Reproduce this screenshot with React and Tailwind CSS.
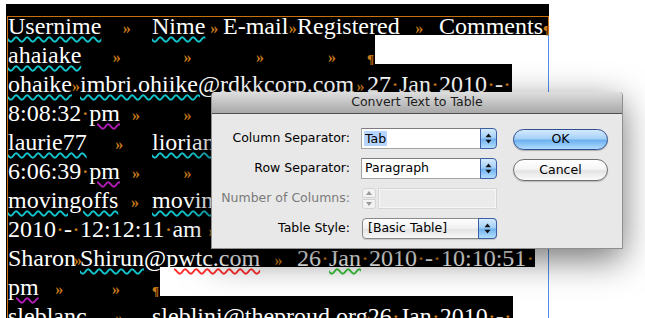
import React from 'react';

const STOPS = [80, 152, 223, 297, 367, 439, 511];

let _ctx = null;
function textWidth(s) {
  if (!_ctx) _ctx = document.createElement('canvas').getContext('2d');
  _ctx.font = '24px "Liberation Serif"';
  return _ctx.measureText(s).width;
}

const UL = {
  c: 'underline decoration-wavy decoration-[1.5px] underline-offset-[2px] decoration-[#12c4cc]',
  m: 'underline decoration-wavy decoration-[1.5px] underline-offset-[2px] decoration-[#b11cb8]',
  r: 'underline decoration-wavy decoration-[1.5px] underline-offset-[2px] decoration-[#ff2d2d]',
  g: 'underline decoration-wavy decoration-[1.5px] underline-offset-[2px] decoration-[#39c239]',
};

const LINES = [
  [{ u: 'c', t: 'Usernime' }, 'T', { u: 'c', t: 'Nime' }, 'T', 'E-mail', 'T', 'Registered', 'T', 'Comments', 'P'],
  [{ u: 'c', t: 'ahaiake' }, 'T', 'T', 'T', 'T', 'P'],
  [{ u: 'c', t: 'ohaike' }, 'T', { u: 'c', t: 'imbri.ohiike@rdkkcorp.com' }, 'T', '27 Jan 2010 - '],
  ['8:08:32 ', { u: 'm', t: 'pm' }, 'T', 'T', 'T', 'T', 'P'],
  [{ u: 'c', t: 'laurie77' }, 'T', { u: 'c', t: 'liorian@aol.com' }, 'T', '27 Jan 2010 - '],
  ['6:06:39 ', { u: 'm', t: 'pm' }, 'T', 'T', 'T', 'T', 'P'],
  [{ u: 'c', t: 'movingoffs' }, 'T', { u: 'c', t: 'movingoffs@aol.com' }, 'T', '27 Jan '],
  ['2010 - 12:12:11 am', 'T', 'T', 'T', 'P'],
  ['Sharon', 'T', { u: 'c', t: 'Shirun' }, '@', { u: 'r', t: 'pwtc.com' }, 'T', '26 ', { u: 'g', t: 'Jan' }, ' 2010 - 10:10:51 '],
  [{ u: 'm', t: 'pm' }, 'T', 'T', 'P'],
  [{ u: 'c', t: 'sleblanc' }, 'T', { u: 'c', t: 'sleblini' }, '@theproud.org', 'T0', '26 Jan 2010 - '],
];

function Txt({ s }) {
  const parts = s.split(' ');
  return parts.map((p, i) => (
    <React.Fragment key={i}>
      {i > 0 && <span className="text-[#c8791a]">·</span>}
      {p}
    </React.Fragment>
  ));
}

function DocLine({ items, first }) {
  let x = 8;
  const out = [];
  items.forEach((it, i) => {
    if (it === 'T' || it === 'T0') {
      let w = 0;
      if (it === 'T') {
        const stop = STOPS.find((s) => s > x + 0.5) ?? x + 40;
        w = Math.max(0, stop - x);
      }
      out.push(
        <span
          key={i}
          className="inline-flex justify-center leading-none text-[16px] font-bold text-[#c8791a]"
          style={{ width: w }}
        >
          »
        </span>
      );
      x += w;
    } else if (it === 'P') {
      out.push(
        <span key={i} className="leading-none text-[13px] font-bold text-[#c8791a]">
          ¶
        </span>
      );
      x += 7;
    } else if (typeof it === 'string') {
      out.push(<Txt key={i} s={it} />);
      x += textWidth(it.replace(/ /g, '·'));
    } else {
      out.push(
        <span key={i} className={UL[it.u]}>
          <Txt s={it.t} />
        </span>
      );
      x += textWidth(it.t);
    }
  });
  return (
    <div
      className={
        first
          ? 'h-[31px] pt-[8px] w-[543px] leading-[29px] bg-black text-white pl-[2px] whitespace-nowrap'
          : 'h-[29px] pt-[6px] w-fit leading-[29px] bg-black text-white pl-[2px] pr-[1px] whitespace-nowrap'
      }
    >
      {out}
    </div>
  );
}

function Arrows({ color = '#111' }) {
  return (
    <svg width="7" height="11" viewBox="0 0 7 11">
      <path d="M3.5 0.5 L6.5 4.2 L0.5 4.2Z" fill={color} />
      <path d="M0.5 6.8 L6.5 6.8 L3.5 10.5Z" fill={color} />
    </svg>
  );
}

function BlueStep() {
  return (
    <div className="w-[17px] h-[21px] shrink-0 rounded-r-[4px] border border-[#3b5fa6] bg-[linear-gradient(to_bottom,#d6ebfd_0%,#a3d0f8_45%,#73b4ef_55%,#b4defe_100%)] flex items-center justify-center">
      <Arrows />
    </div>
  );
}

function Combo({ children }) {
  return (
    <div className="flex h-[21px]">
      <div className="flex-1 bg-white border border-[#a4a4a4] border-t-[#7d7d7d] flex items-center pl-[2px] -mr-px">
        {children}
      </div>
      <BlueStep />
    </div>
  );
}

function Label({ children, dim }) {
  return (
    <div className={`flex items-center justify-end h-[21px] ${dim ? 'text-[#7a7a7a]' : 'text-black'}`}>
      {children}
    </div>
  );
}

export default function App() {
  return (
    <div className="relative w-[645px] h-[318px] overflow-hidden bg-white font-['Liberation_Serif',serif] text-[24px]">
      <div className="pt-[4px] pl-[6px]">
        {LINES.map((l, i) => (
          <DocLine key={i} items={l} first={i === 0} />
        ))}
      </div>

      {/* frame edges */}
      <div className="absolute left-[7px] top-[16px] w-[542px] h-px bg-[#c8700a]" />
      <div className="absolute left-[7px] top-[16px] w-px h-[302px] bg-[#c8700a]" />
      <div className="absolute left-[548px] top-[16px] w-px h-[19px] bg-[#c8700a]" />
      <div className="absolute left-[548px] top-[35px] w-px h-[283px] bg-[#4d8ff0]" />

      {/* dialog */}
      <div className="absolute left-[211px] top-[92px] w-[412px] h-[157px] bg-[#e8e8e8] border border-t-0 border-[#8f8f8f] rounded-t-[4px] shadow-[0_10px_35px_rgba(0,0,0,0.55)] font-['DejaVu_Sans',sans-serif] text-[12.5px] leading-none text-black">
        <div className="h-[22px] rounded-t-[4px] border-b border-[#4f4f4f] bg-[linear-gradient(to_bottom,#dedede,#a8a8a8)] flex items-center justify-center text-[#1c1c1c]">
          Convert Text to Table
        </div>
        <div className="flex pt-[14px]">
          <div className="grid grid-cols-[138px_136px] gap-x-[11px] gap-y-[9px] auto-rows-[21px]">
            <Label>Column Separator:</Label>
            <Combo>
              <span className="bg-[#b5d5ff] px-[1px] leading-[15px]">Tab</span>
            </Combo>

            <Label>Row Separator:</Label>
            <Combo>
              <span className="px-[1px]">Paragraph</span>
            </Combo>

            <Label dim>Number of Columns:</Label>
            <div className="flex h-[21px] gap-[2px] pl-px">
              <div className="w-[14px] h-[21px] flex flex-col gap-px">
                <div className="flex-1 bg-[#f2f2f2] border border-[#d4d4d4] rounded-t-[3px] flex items-center justify-center">
                  <svg width="6" height="4" viewBox="0 0 6 4">
                    <path d="M3 0 L6 4 L0 4Z" fill="#9a9a9a" />
                  </svg>
                </div>
                <div className="flex-1 bg-[#f2f2f2] border border-[#d4d4d4] rounded-b-[3px] flex items-center justify-center">
                  <svg width="6" height="4" viewBox="0 0 6 4">
                    <path d="M0 0 L6 0 L3 4Z" fill="#9a9a9a" />
                  </svg>
                </div>
              </div>
              <div className="flex-1 bg-[#ebebeb] border border-[#d6d6d6] shadow-[inset_0_0_0_1px_#f6f6f6]" />
            </div>

            <Label>Table Style:</Label>
            <div className="flex h-[21px] ml-px rounded-[4px] border border-[#8a8a8a] bg-[linear-gradient(to_bottom,#ffffff,#f0f0f0_50%,#e2e2e2_51%,#f7f7f7)] shadow-[0_1px_1px_rgba(0,0,0,0.15)]">
              <div className="flex-1 flex items-center pl-[5px]">[Basic Table]</div>
              <div className="w-[19px] -my-px -mr-px rounded-r-[4px] border border-[#3b5fa6] bg-[linear-gradient(to_bottom,#d6ebfd_0%,#a3d0f8_45%,#73b4ef_55%,#b4defe_100%)] flex items-center justify-center">
                <Arrows />
              </div>
            </div>
          </div>

          <div className="ml-[16px] mt-px flex flex-col gap-[9px]">
            <div className="w-[95px] h-[21px] rounded-full border border-[#2d4f8f] bg-[linear-gradient(to_bottom,#d4eafd_0%,#a5d1f8_45%,#6eb1ee_55%,#b0dcff_100%)] shadow-[0_1px_1px_rgba(0,0,0,0.25)] flex items-center justify-center">
              OK
            </div>
            <div className="w-[95px] h-[22px] rounded-full border border-[#707070] bg-[linear-gradient(to_bottom,#ffffff_0%,#f5f5f5_45%,#e3e3e3_55%,#fbfbfb_100%)] shadow-[0_1px_1px_rgba(0,0,0,0.2)] flex items-center justify-center">
              Cancel
            </div>
          </div>
        </div>
      </div>
    </div>
  );
}
